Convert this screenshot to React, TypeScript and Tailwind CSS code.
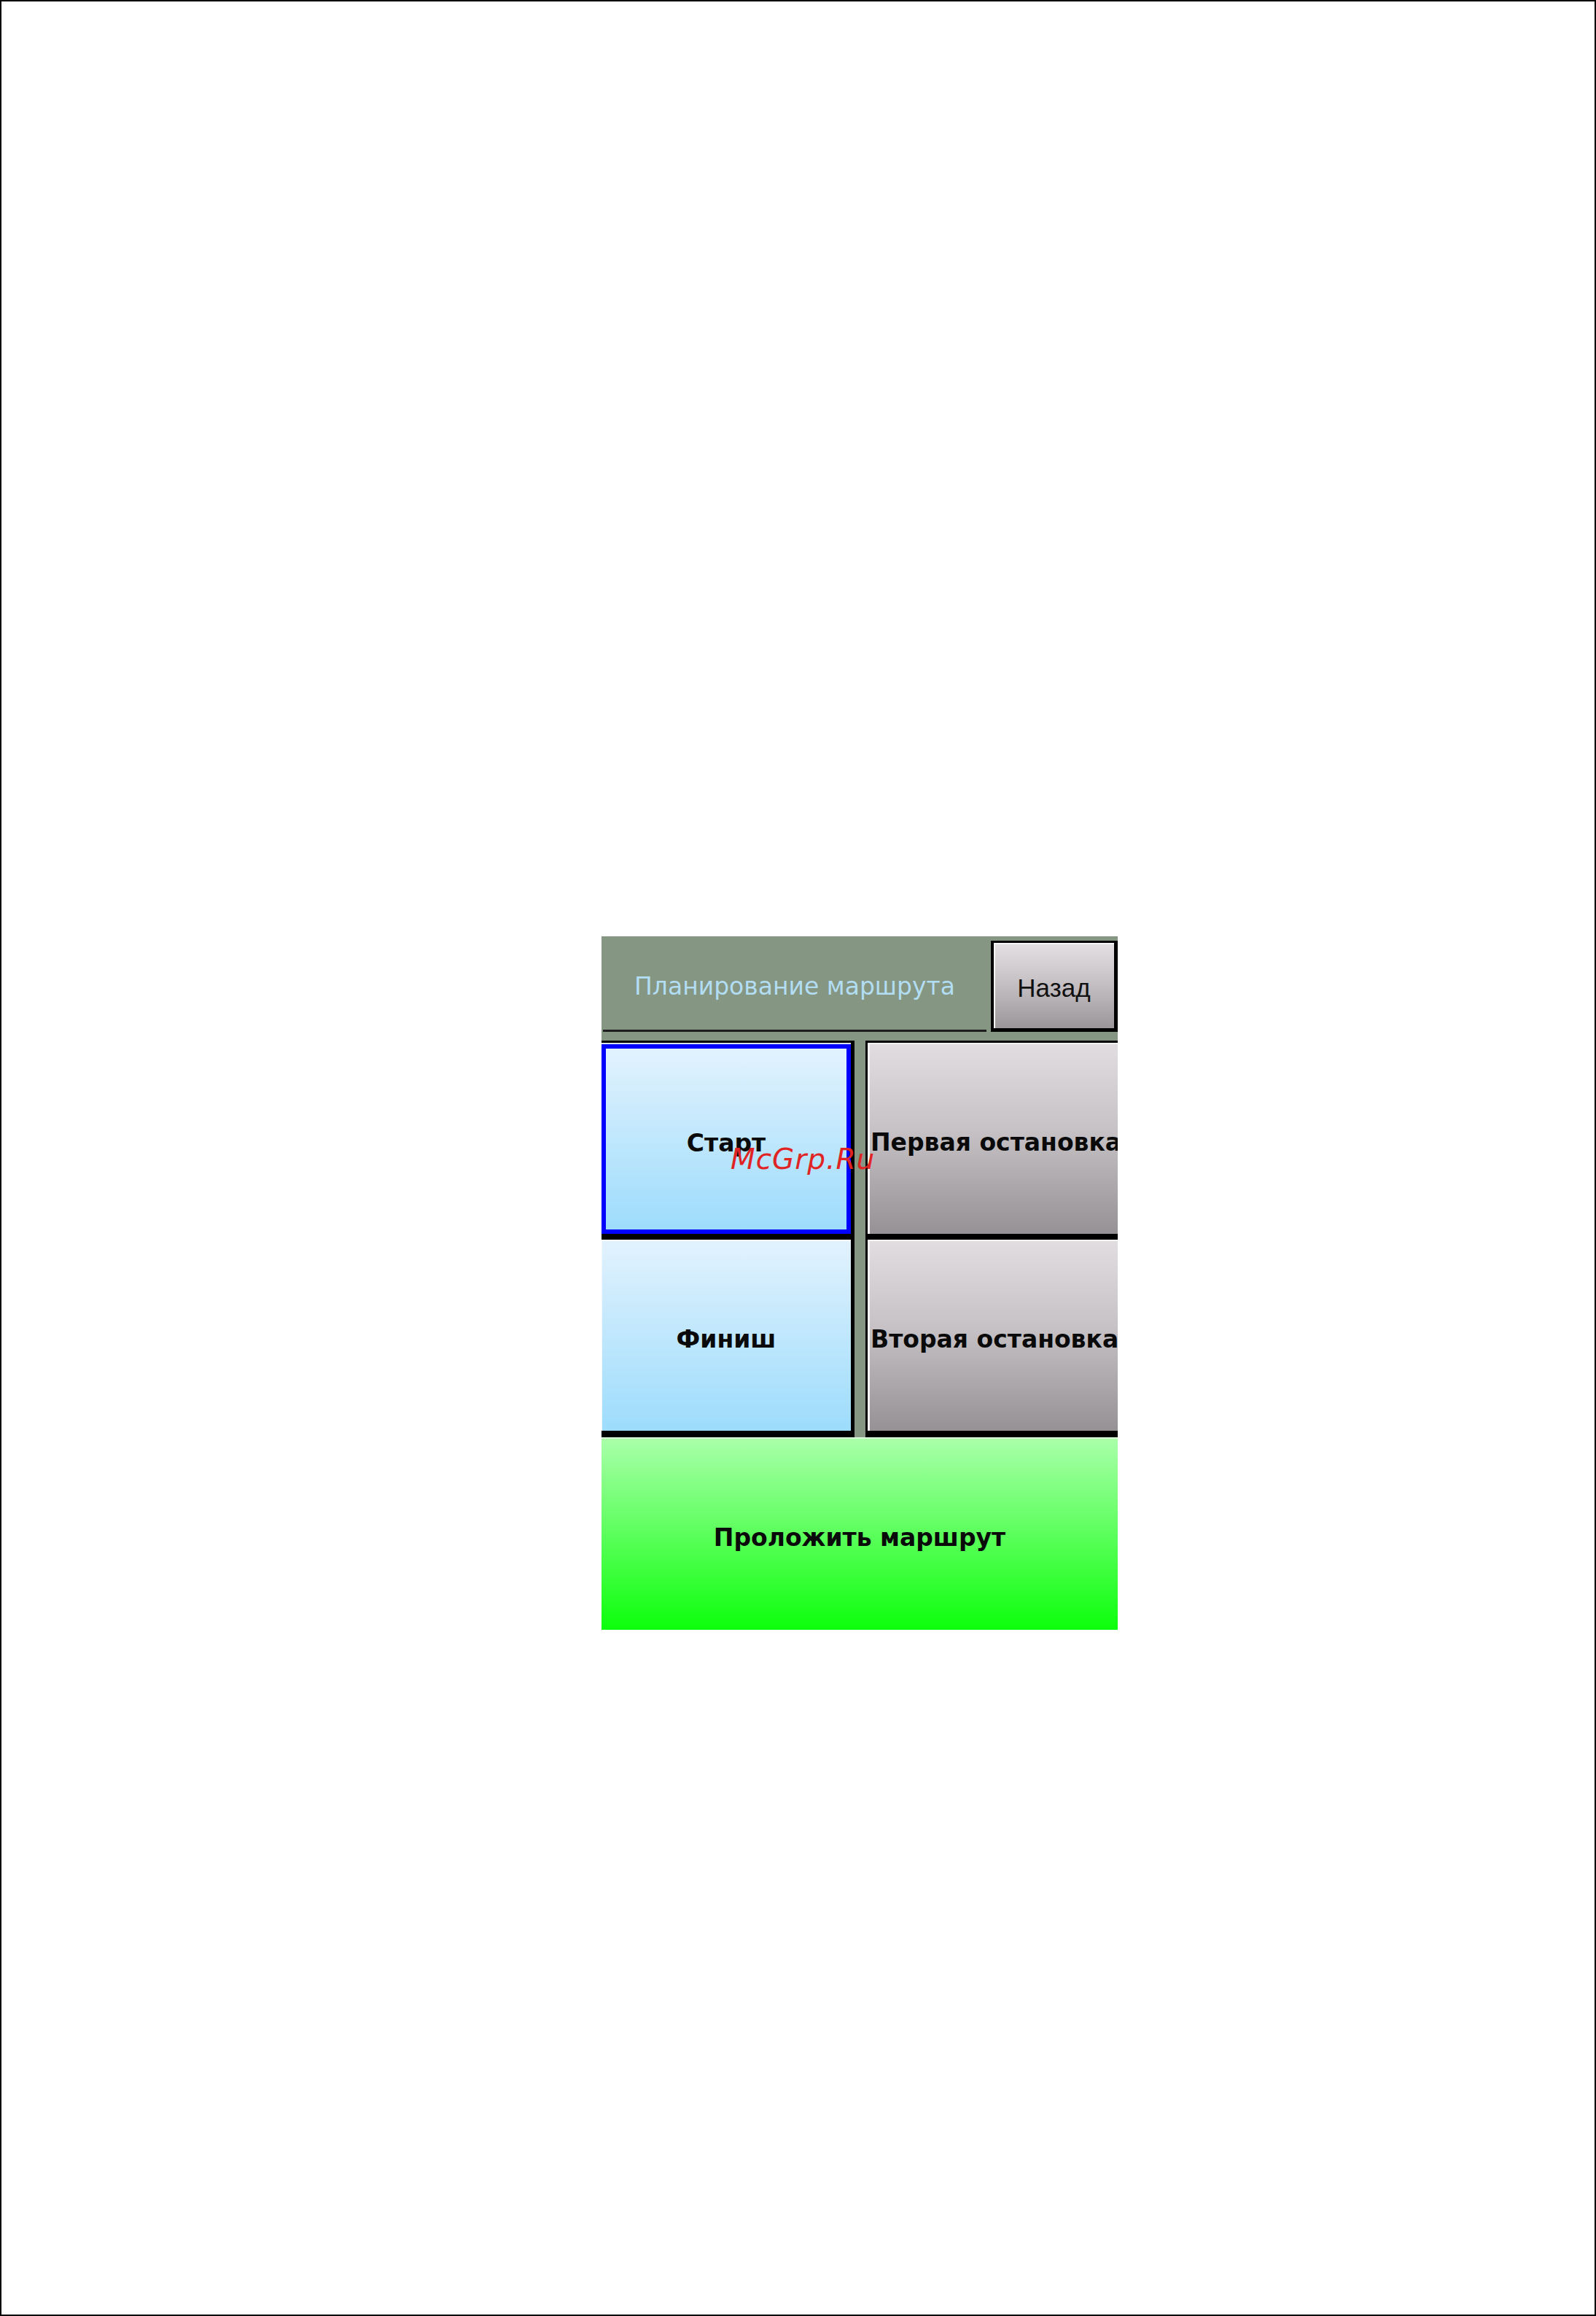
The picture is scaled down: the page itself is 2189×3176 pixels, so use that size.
const ui = "font-['DejaVu_Sans',sans-serif]"

function GrayCell({ label, first }: { label: string; first?: boolean }) {
    return (
        <div
            className={
                first
                    ? 'flex h-[273px] items-center overflow-hidden whitespace-nowrap border-t-[3px] border-b-[8px] border-l-[3px] border-black bg-[linear-gradient(#e1dde1,#c6c2c6_45%,#959195)] pl-[4px] shadow-[inset_3px_2px_0_#f2f2f2]'
                    : 'flex h-[271px] items-center overflow-hidden whitespace-nowrap border-b-[9px] border-l-[3px] border-black bg-[linear-gradient(#e1dde1,#c6c2c6_45%,#959195)] pl-[4px] shadow-[inset_3px_2px_0_#f2f2f2]'
            }
        >
            <span className="pt-[10px] text-[33px] font-bold leading-none text-[#0a0a0a]">{label}</span>
        </div>
    )
}

export default function App() {
    return (
        <div className={`relative h-[3176px] w-[2189px] border-2 border-black bg-white pl-[823px] pt-[1282px] ${ui}`}>
            <div className="flex w-[708px] flex-col">
                {/* header */}
                <div className="flex h-[143px] bg-[#859683]">
                    <div className="ml-[2px] flex h-[131px] w-[526px] items-center justify-center border-b-[3px] border-[#1e1e1e] pt-[8px]">
                        <span className="text-[33px] leading-none text-[#b2ddf2]">Планирование маршрута</span>
                    </div>
                    <div className="ml-[6px] mt-[6px] flex h-[125px] w-[174px] items-center justify-center border-t-[3px] border-r-[5px] border-b-[5px] border-l-[4px] border-black bg-[linear-gradient(#e4e0e4,#c2bec2_50%,#9a969a)] shadow-[inset_2px_2px_0_#f6f6f6]">
                        <span className="pt-[6px] font-['Liberation_Sans',sans-serif] text-[35px] leading-none text-[#111]">Назад</span>
                    </div>
                </div>

                {/* point buttons */}
                <div className="flex h-[544px] bg-[#859683]">
                    <div className="flex w-[347px] flex-col">
                        <div className="flex h-[273px] flex-col border-t-[3px] border-r-[5px] border-b-[8px] border-black bg-[#d6e2ec] pt-[2px]">
                            <div className="flex flex-1 items-center justify-center border-[6px] border-[#0000ff] bg-[linear-gradient(#e2f2fd,#9ddcfc)]">
                                <span className="pt-[10px] text-[33px] font-bold leading-none text-[#0a0a0a]">Старт</span>
                            </div>
                        </div>
                        <div className="flex h-[271px] items-center justify-center border-r-[5px] border-b-[9px] border-black bg-[linear-gradient(#e2f2fd,#9ddcfc)] shadow-[inset_1px_2px_0_#f4f8fc]">
                            <span className="pt-[10px] text-[33px] font-bold leading-none text-[#0a0a0a]">Финиш</span>
                        </div>
                    </div>
                    <div className="w-[15px]" />
                    <div className="flex w-[346px] flex-col">
                        <GrayCell label="Первая остановка" first />
                        <GrayCell label="Вторая остановка" />
                    </div>
                </div>

                {/* build route */}
                <div className="flex h-[264px] items-center justify-center bg-[linear-gradient(#aaffaa,#6cff6c_40%,#0cff0c)] shadow-[inset_0_2px_0_#dcffdc]">
                    <span className="pt-[10px] text-[33px] font-bold leading-none text-[#0a0a0a]">Проложить маршрут</span>
                </div>
            </div>

            <span className="absolute left-[1000px] top-[1568px] text-[39px] italic leading-none tracking-[1px] text-[#e02424]">
                McGrp.Ru
            </span>
        </div>
    )
}
